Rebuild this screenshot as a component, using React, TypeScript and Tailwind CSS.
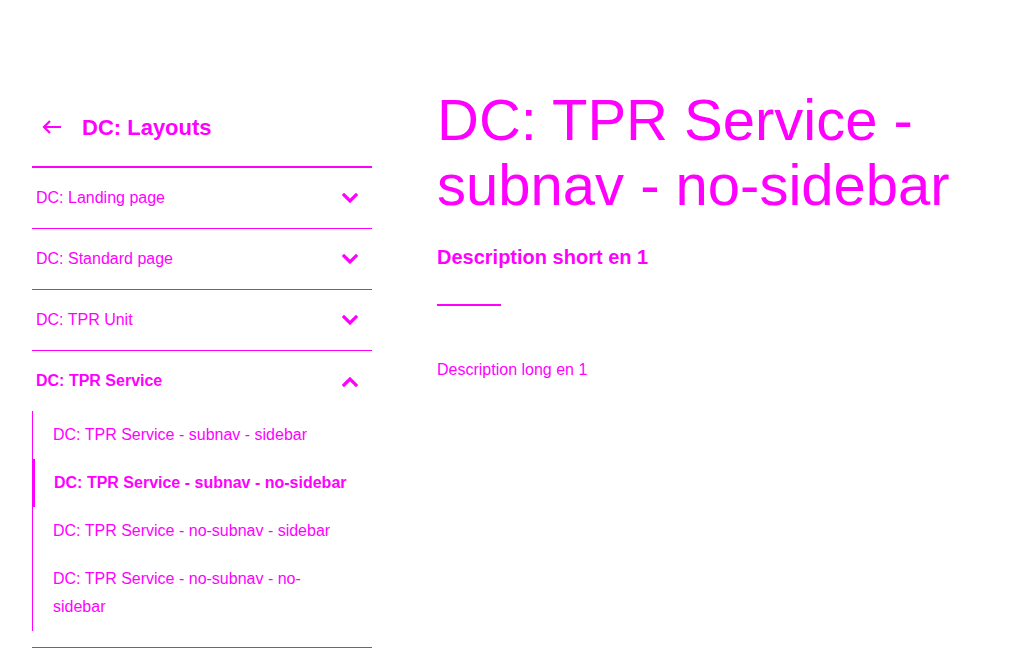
import { useState } from "react"

const sections = [
  { title: "DC: Landing page", children: [] as string[] },
  { title: "DC: Standard page", children: [] as string[] },
  { title: "DC: TPR Unit", children: [] as string[] },
  {
    title: "DC: TPR Service",
    children: [
      "DC: TPR Service - subnav - sidebar",
      "DC: TPR Service - subnav - no-sidebar",
      "DC: TPR Service - no-subnav - sidebar",
      "DC: TPR Service - no-subnav - no-sidebar",
    ],
  },
]

function Chevron({ up }: { up?: boolean }) {
  return (
    <svg width="16" height="11" viewBox="0 0 16 11" fill="none" className="shrink-0">
      <polyline
        points={up ? "2,9 8,3 14,9" : "2,2 8,8 14,2"}
        stroke="#ff00ff"
        strokeWidth="3.2"
        strokeLinecap="square"
      />
    </svg>
  )
}

function ArrowLeft() {
  return (
    <svg width="20" height="14" viewBox="0 0 20 14" fill="none">
      <path d="M19 7H2M8 1L2 7l6 6" stroke="#ff00ff" strokeWidth="2.2" />
    </svg>
  )
}

export default function App() {
  const [open, setOpen] = useState(3)
  const active = "DC: TPR Service - subnav - no-sidebar"

  return (
    <div className="min-h-screen bg-white text-[#ff00ff] font-['Liberation_Sans',Arial,sans-serif]">
      <div className="flex px-8">
        <aside className="w-[340px] shrink-0 pt-[100px]">
          <a href="#" className="flex h-[54px] items-center gap-5 pl-[10px]">
            <ArrowLeft />
            <span className="text-[22px] font-bold">DC: Layouts</span>
          </a>
          <div className="mt-3 border-t-2 border-[#ff00ff]">
            {sections.map((s, i) => {
              const isOpen = open === i
              return (
                <div key={s.title} className="border-b border-[#ff00ff]">
                  <button
                    onClick={() => setOpen(isOpen ? -1 : i)}
                    className="flex h-[60px] w-full items-center justify-between pl-1 pr-[14px] text-left text-[16px]"
                  >
                    <span className={isOpen ? "font-bold" : ""}>{s.title}</span>
                    <Chevron up={isOpen} />
                  </button>
                  {isOpen && s.children.length > 0 && (
                    <ul className="mb-4 border-l border-[#ff00ff]">
                      {s.children.map((c) => (
                        <li
                          key={c}
                          className={
                            c === active
                              ? "-ml-px border-l-[3px] border-[#ff00ff] py-2.5 pl-[19px] pr-6 text-[16px] leading-[28px] font-bold"
                              : "py-2.5 pl-5 pr-6 text-[16px] leading-[28px]"
                          }
                        >
                          {c}
                        </li>
                      ))}
                    </ul>
                  )}
                </div>
              )
            })}
          </div>
        </aside>

        <main className="ml-[65px] flex-1 pt-[87px]">
          <h1 className="text-[58px] leading-[65px]">DC: TPR Service - subnav - no-sidebar</h1>
          <p className="mt-[26px] text-[20px] leading-[28px] font-bold">Description short en 1</p>
          <div className="mt-[33px] h-[2px] w-16 bg-[#ff00ff]" />
          <p className="mt-[50px] text-[16px] leading-[28px]">Description long en 1</p>
        </main>
      </div>
    </div>
  )
}
